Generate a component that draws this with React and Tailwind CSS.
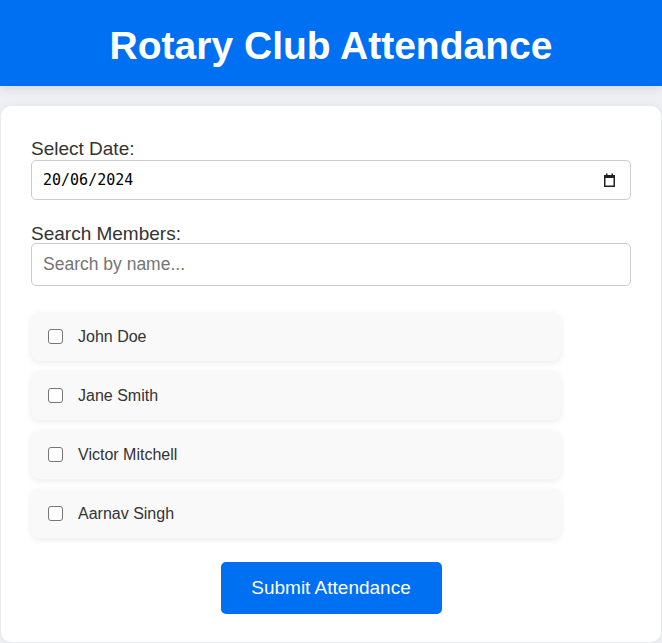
import React from "react";

const members = ["John Doe", "Jane Smith", "Victor Mitchell", "Aarnav Singh"];

function CalendarIcon() {
  return (
    <svg width="11" height="14" viewBox="0 0 11 14" className="block">
      <rect x="0.75" y="2.75" width="9.5" height="10.5" fill="none" stroke="#222" strokeWidth="1.5" />
      <rect x="0" y="2" width="11" height="3" fill="#222" />
      <rect x="2" y="0.5" width="1.5" height="2" fill="#222" />
      <rect x="7.5" y="0.5" width="1.5" height="2" fill="#222" />
    </svg>
  );
}

export default function App() {
  return (
    <div className="min-h-[643px] bg-[#eef0f4] pb-[2px]" style={{ fontFamily: '"Liberation Sans", Arial, sans-serif' }}>
      <header className="h-[86px] bg-[#0070f3] flex items-center justify-center shadow-[0_2px_10px_rgba(0,0,0,0.12)] relative">
        <h1 className="text-white font-bold text-[39px] leading-none pt-[5px]">Rotary Club Attendance</h1>
      </header>
      <main className="mx-px mt-[20px] bg-white rounded-[10px] shadow-[0_0_8px_rgba(0,0,0,0.06)] px-[30px] pt-[33px] pb-[28px]">
        <label className="block text-[19px] leading-5 text-[#333] mb-px">Select Date:</label>
        <div className="h-[40px] border border-[#ccc] rounded-[5px] flex items-center justify-between pl-[11px] pr-[15px]">
          <span className="text-[15px] text-black" style={{ fontFamily: '"DejaVu Sans Mono", monospace' }}>20/06/2024</span>
          <CalendarIcon />
        </div>
        <label className="block text-[19px] leading-5 text-[#333] mt-[24px]">Search Members:</label>
        <input
          type="text"
          placeholder="Search by name..."
          className="block w-full h-[43px] -mt-px border border-[#ccc] rounded-[5px] px-[11px] text-[17.5px] placeholder:text-[#757575] outline-none"
        />
        <ul className="mt-[26px] flex flex-col gap-[10px]">
          {members.map((m) => (
            <li
              key={m}
              className="w-[530px] h-[49px] bg-[#f9f9f9] rounded-[8px] shadow-[0_2px_6px_rgba(0,0,0,0.08)] flex items-center pl-[17px]"
            >
              <span className="w-[15px] h-[15px] border border-[#767676] rounded-[3px] bg-white" />
              <span className="ml-[15px] text-[16px] text-[#333]">{m}</span>
            </li>
          ))}
        </ul>
        <div className="flex justify-center mt-[24px]">
          <button className="w-[221px] h-[52px] bg-[#0070f3] text-white text-[19px] rounded-[5px]">
            Submit Attendance
          </button>
        </div>
      </main>
    </div>
  );
}
